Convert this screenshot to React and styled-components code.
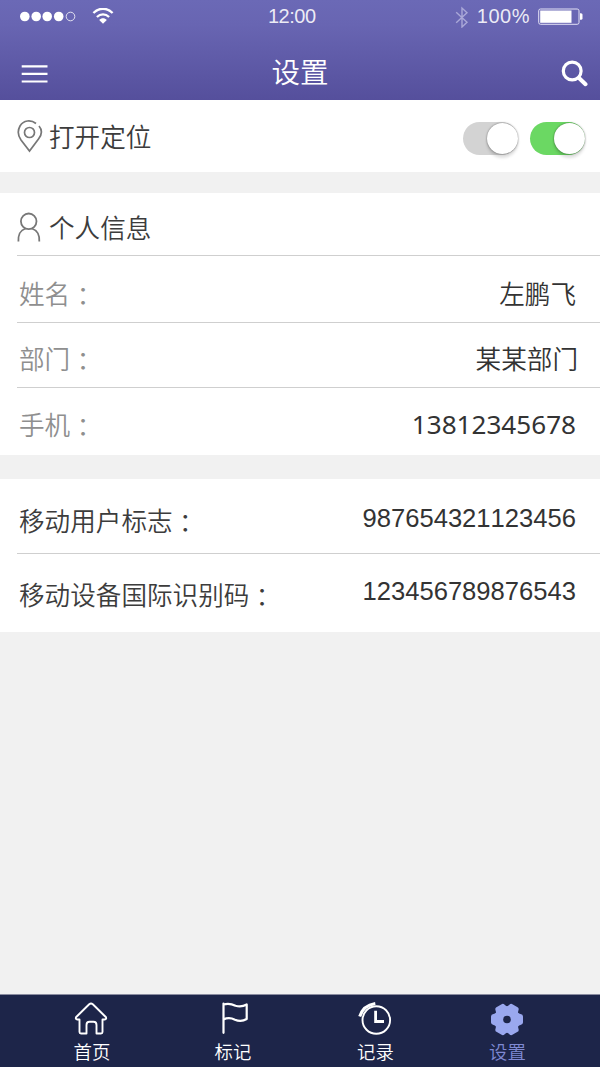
import React from 'react';
import styled, { createGlobalStyle } from 'styled-components';

const GlobalStyle = createGlobalStyle`
  * {
    box-sizing: border-box;
  }
  body {
    margin: 0;
    background: #f1f1f1;
    font-family: "Liberation Sans", "Noto Sans CJK SC", sans-serif;
  }
`;

const Screen = styled.div`
  display: flex;
  flex-direction: column;
  width: 600px;
  height: 1067px;
  background: #f1f1f1;
  overflow: hidden;
`;

const Header = styled.header`
  height: 100px;
  color: white;
  background: linear-gradient(#6b69b6 0%, #6865b2 25%, #554f9c 100%);
`;

const StatusBar = styled.div`
  display: grid;
  grid-template-columns: 248px 1fr auto;
  align-items: center;
  height: 33px;
  padding: 0 17px 0 20px;
`;

const StatusGroup = styled.div`
  display: flex;
  align-items: center;
  gap: 8px;
`;

const StatusText = styled.span`
  font-size: 20px;
  line-height: 33px;
  letter-spacing: ${props => props.$spacing || 0}px;
  color: rgba(255, 255, 255, 0.88);
`;

const TitleBar = styled.div`
  display: grid;
  grid-template-columns: 1fr auto 1fr;
  align-items: center;
  height: 67px;
  padding: 14px 12px 0 21px;
`;

const Title = styled.h1`
  margin: 0 9px 5px 0;
  font-family: "Noto Sans CJK SC", sans-serif;
  font-size: 28.5px;
  font-weight: 350;
  line-height: 40px;
`;

const IconButton = styled.button`
  display: flex;
  justify-self: ${props => props.$end ? 'end' : 'start'};
  padding: 0;
  border: none;
  background: none;
  color: white;
`;

const Panel = styled.section`
  margin-bottom: ${props => props.$gap}px;
  padding-left: 17px;
  background: white;
`;

const Row = styled.div`
  display: flex;
  align-items: center;
  justify-content: space-between;
  height: ${props => props.$height}px;
  padding: ${props => props.$top || 0}px ${props => props.$right || 24}px 0 0;
  border-bottom: ${props => props.$last ? 'none' : '1px solid #cfcfcf'};
`;

const Heading = styled.div`
  display: flex;
  align-items: center;
  gap: 6px;
  font-family: "Noto Sans CJK SC", sans-serif;
  font-size: 25.6px;
  font-weight: 350;
  line-height: 36px;
  color: #3c3c3c;
`;

const Label = styled.span`
  padding-left: 2px;
  font-family: "Noto Sans CJK SC", sans-serif;
  font-size: 25.6px;
  font-weight: 350;
  line-height: 36px;
  color: ${props => props.$dark ? '#3c3c3c' : '#8f8f8f'};
`;

// the TC face sets the full-width colon in the middle of its cell
const Colon = styled.span`
  font-family: "Noto Sans CJK TC", sans-serif;
  line-height: 0;
  vertical-align: -2px;
`;

const Value = styled.span`
  font-family: ${props => props.$font || '"Noto Sans CJK SC"'}, sans-serif;
  font-size: ${props => props.$size || 25.6}px;
  font-weight: ${props => props.$weight || 350};
  font-kerning: none;
  line-height: 36px;
  color: #333;
  margin-top: ${props => props.$shift || 0}px;
`;

const Switches = styled.div`
  display: flex;
  gap: 12px;
  margin-top: 5px;
`;

const Switch = styled.div`
  display: flex;
  justify-content: flex-end;
  width: 55px;
  height: 33px;
  padding-top: 1px;
  border-radius: 17px;
  background: ${props => props.$on ? '#6bd863' : '#d3d3d3'};
`;

const Knob = styled.div`
  width: 31px;
  height: 31px;
  border-radius: 50%;
  background: white;
  box-shadow: 0 0 2px rgba(0, 0, 0, 0.5), 0 4px 3px rgba(0, 0, 0, 0.12);
`;

const TabBar = styled.nav`
  display: grid;
  grid-template-columns: 141px 141px 144px 120px;
  height: 73px;
  margin-top: auto;
  padding-left: 20.5px;
  border-top: 1px solid #8a8ca0;
  background: #1d2549;
`;

const Tab = styled.div`
  display: flex;
  flex-direction: column;
  align-items: center;
  padding-top: 6px;
  color: ${props => props.$active ? '#7f89d3' : 'white'};
`;

const TabLabel = styled.span`
  font-family: "Noto Sans CJK SC", sans-serif;
  font-size: 18.4px;
  line-height: 26px;
  font-weight: 350;
  margin-top: 1px;
  padding-left: 2px;
`;

const Signal = () => (
  <svg width="64" height="20" viewBox="0 0 64 20">
    {[4.8, 16.2, 27.2, 38.7].map(x => <circle key={x} cx={x} cy="9.5" r="4.8" fill="white" />)}
    <circle cx="50.5" cy="9.5" r="4.3" fill="none" stroke="white" strokeOpacity=".8" />
  </svg>
);

const Wifi = () => (
  <svg width="22" height="18" viewBox="0 0 22 18" fill="none" stroke="white" strokeWidth="2.3">
    <path d="M1.4 5C7 -.7 15 -.7 20.6 5" />
    <path d="M4.9 9C8.5 5.5 13.5 5.5 17.1 9" />
    <path d="M11 15.800 7.200 12C9.400 9.800 12.600 9.800 14.800 12Z" fill="white" stroke="none" />
  </svg>
);

const Bluetooth = () => (
  <svg width="14" height="22" viewBox="0 0 14 22" fill="none" stroke="#aaa8d8" strokeWidth="1.4">
    <path d="M1.2 6.3 12 16.3 7 21V2L12 6.700 1.200 16.700" />
  </svg>
);

const Battery = () => (
  <svg width="45" height="18" viewBox="0 0 45 18">
    <rect x=".7" y="1" width="40.3" height="15.3" rx="1.8" fill="none" stroke="#e3e2f5" />
    <rect x="2.2" y="2.500" width="31.3" height="12.3" fill="white" />
    <path d="M42 5.300h1q1.5 0 1.5 1.5v3.500q0 1.500-1.500 1.500h-1Z" fill="white" />
  </svg>
);

const MenuIcon = () => (
  <svg width="27" height="20" viewBox="0 0 27 20" stroke="white" strokeWidth="2.2">
    <path d="M.7 2.300H26.500M.7 9.900H26.500M.7 17.500H26.500" />
  </svg>
);

const SearchIcon = () => (
  <svg width="27" height="27" viewBox="0 0 27 27" fill="none" stroke="white" strokeLinecap="round">
    <circle cx="11.2" cy="11" r="8.9" strokeWidth="3.2" />
    <path d="M18 18 24.500 24.200" strokeWidth="4" />
  </svg>
);

const PinIcon = () => (
  <svg width="26" height="34" viewBox="0 0 26 34" fill="none" stroke="#777" strokeWidth="1.7">
    <path d="M19 4.500C14 .5 6.500 1 3 7-.2 12.800 1.500 17.500 4 21L12.500 32 21.500 20C25 15.500 25 10.500 22 7" />
    <circle cx="12.500" cy="13.500" r="5" />
  </svg>
);

const UserIcon = () => (
  <svg width="26" height="30" viewBox="0 0 26 30" fill="none" stroke="#777" strokeWidth="1.8">
    <circle cx="11.7" cy="9.3" r="7.8" />
    <path d="M1.400 29.500C1.100 22 3 18.500 8.500 16.500M14.900 16.500C20.500 18.500 22.700 22 22.300 29.500" />
  </svg>
);

const HomeIcon = () => (
  <svg width="36" height="36" viewBox="0 0 36 36" fill="none" stroke="white" strokeWidth="1.9" strokeLinejoin="round">
    <path d="M16.200 3.200Q18 1.800 19.800 3.200L33 16.200Q33.700 18.300 31.700 18.500H29.500V31Q29.500 32.500 28 32.500H23.500V24Q23.500 20.800 20.500 20.800H16.500Q13.500 20.800 13.500 24V32.500H8Q6.500 32.500 6.500 31V18.500H4.300Q2.300 18.300 3 16.200Z" />
  </svg>
);

const FlagIcon = () => (
  <svg width="36" height="36" viewBox="0 0 36 36" fill="none" stroke="white" strokeWidth="2.2" strokeLinejoin="round" strokeLinecap="round">
    <path d="M9.500 31.800V2.500M9.500 3.500C14 2.200 18 3 21.500 4.700 25 5.700 29 5.500 32.700 3.500V18C29 20.300 25 20.500 21 18.700 17.500 17 13.500 16.500 9.500 18.500" />
  </svg>
);

const ClockIcon = () => (
  <svg width="36" height="36" viewBox="0 0 36 36" fill="none" stroke="white">
    <circle cx="19.3" cy="19" r="13.8" strokeWidth="1.9" />
    <path d="M18.600 9.800V20.500H27" strokeWidth="2.8" />
    <path d="M2.700 15.500C4.800 8.500 10.500 3.600 18.300 2.400" strokeWidth="3" />
  </svg>
);

// six blunt teeth around a round body, the hub is left in the bar's colour
const GearIcon = () => (
  <svg width="36" height="36" viewBox="0 0 36 36">
    <g fill="#9aa8ef">
      <circle cx="18" cy="18.5" r="13.2" />
      {[30, 90, 150, 210, 270, 330].map(a => (
        <path key={a} transform={`rotate(${a} 18 18.5)`}
          d="M9.500 10Q12 8 12.600 5Q13.100 2.500 15 2.500H21Q22.900 2.500 23.400 5Q24 8 26.500 10Z" />
      ))}
    </g>
    <circle cx="18" cy="18.5" r="3.8" fill="#1d2549" />
  </svg>
);

const tabs = [
  { name: '首页', icon: <HomeIcon /> },
  { name: '标记', icon: <FlagIcon /> },
  { name: '记录', icon: <ClockIcon /> },
  { name: '设置', icon: <GearIcon />, active: true },
];

function App() {
  return (
    <Screen>
      <GlobalStyle />
      <Header>
        <StatusBar>
          <StatusGroup>
            <Signal />
            <Wifi />
          </StatusGroup>
          <StatusText $spacing={-0.5}>12:00</StatusText>
          <StatusGroup>
            <Bluetooth />
            <StatusText $spacing={0.5}>100%</StatusText>
            <Battery />
          </StatusGroup>
        </StatusBar>
        <TitleBar>
          <IconButton><MenuIcon /></IconButton>
          <Title>设置</Title>
          <IconButton $end><SearchIcon /></IconButton>
        </TitleBar>
      </Header>

      <Panel $gap={21}>
        <Row $height={72} $right={15} $last>
          <Heading><PinIcon />打开定位</Heading>
          <Switches>
            <Switch><Knob /></Switch>
            <Switch $on><Knob /></Switch>
          </Switches>
        </Row>
      </Panel>

      <Panel $gap={24}>
        <Row $height={63} $top={5}>
          <Heading><UserIcon />个人信息</Heading>
        </Row>
        <Row $height={67} $top={8}>
          <Label>姓名<Colon>：</Colon></Label>
          <Value>左鹏飞</Value>
        </Row>
        <Row $height={65} $top={6} $right={22}>
          <Label>部门<Colon>：</Colon></Label>
          <Value>某某部门</Value>
        </Row>
        <Row $height={67} $top={5} $last>
          <Label>手机<Colon>：</Colon></Label>
          <Value $font='"Noto Sans"' $size={26.1} $weight={400}>13812345678</Value>
        </Row>
      </Panel>

      <Panel $gap={0}>
        <Row $height={75} $top={8}>
          <Label $dark>移动用户标志<Colon>：</Colon></Label>
          <Value $font='"Liberation Sans"' $weight={400} $shift={-5}>987654321123456</Value>
        </Row>
        <Row $height={78} $top={1} $last>
          <Label $dark>移动设备国际识别码<Colon>：</Colon></Label>
          <Value $font='"Liberation Sans"' $weight={400} $shift={-5}>123456789876543</Value>
        </Row>
      </Panel>

      <TabBar>
        {tabs.map(tab => (
          <Tab key={tab.name} $active={tab.active}>
            {tab.icon}
            <TabLabel>{tab.name}</TabLabel>
          </Tab>
        ))}
      </TabBar>
    </Screen>
  );
}

export default App;
